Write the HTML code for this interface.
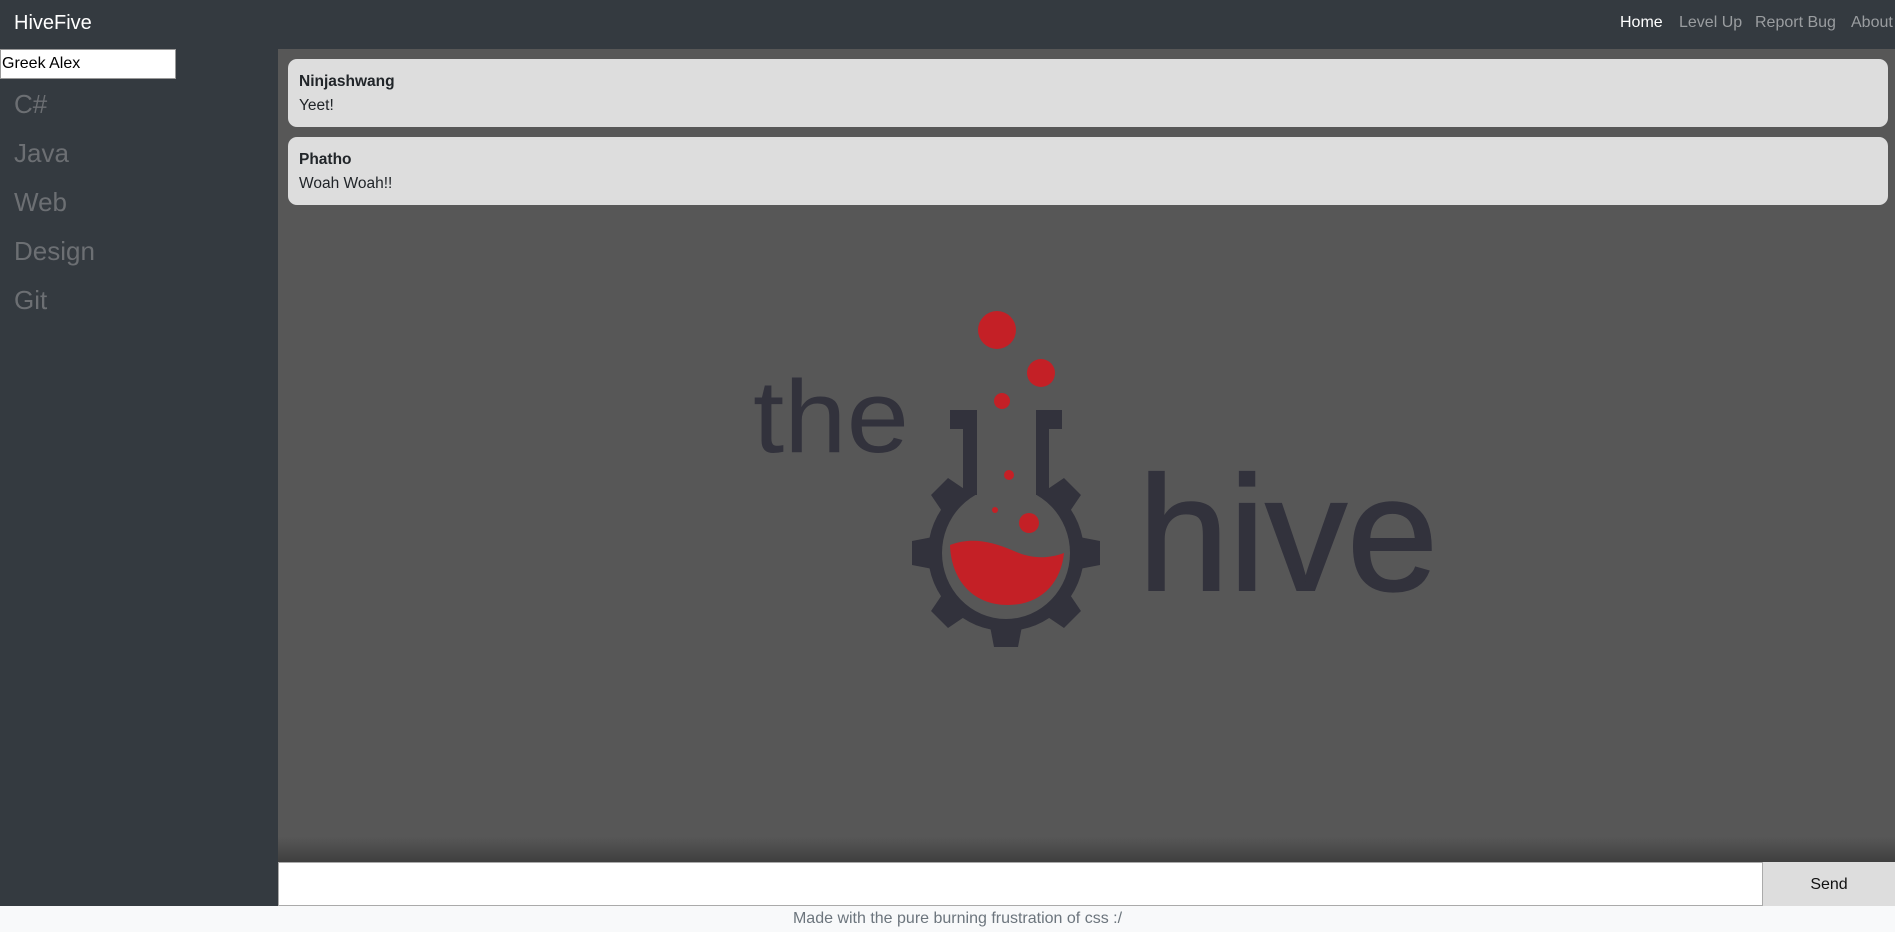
<!DOCTYPE html>
<html><head><meta charset="utf-8"><style>
*{box-sizing:border-box;margin:0;padding:0}
body{width:1895px;height:929px;overflow:hidden;font-family:"Liberation Sans",sans-serif;background:#f8f9fa;position:relative}
.nav{position:absolute;left:0;top:0;width:1895px;height:49px;background:#343a40}
.brand{position:absolute;left:14px;top:12px;font-size:20px;color:#fff}
.links{position:absolute;top:14px;font-size:16px;color:#9a9da0}
.side{position:absolute;left:0;top:49px;width:278px;height:857px;background:#343a40}
.name{position:absolute;left:0;top:49px;width:176px;height:30px;background:#fff;border:1px solid #999;font-size:16px;padding:5px 1px;color:#000}
.item{position:absolute;left:14px;font-size:26px;color:#6c6f73}
.main{position:absolute;left:278px;top:49px;width:1617px;height:813px;background:#575757;overflow:hidden}
.shade{position:absolute;left:0;bottom:0;width:100%;height:25px;background:linear-gradient(#575757,#3f3f3f)}
.card{position:absolute;left:10px;width:1600px;height:68px;background:#dddddd;border-radius:9px;padding:14px 11px 0;color:#212529;font-size:15.5px}
.card b{display:block;margin-bottom:6px}
.inp{position:absolute;left:278px;top:862px;width:1485px;height:44px;background:#fff;border:1px solid #aaa}
.send{position:absolute;left:1763px;top:862px;width:132px;height:44px;background:#dddddd;font-size:16px;text-align:center;line-height:46px;color:#111}
.foot{position:absolute;left:0;top:906px;width:1895px;text-align:center;font-size:16px;color:#6c757d;padding-left:20px;line-height:26px}
</style></head><body>
<div class="nav"><div class="brand">HiveFive</div>
<span class="links" style="left:1620px;color:#fff">Home</span>
<span class="links" style="left:1679px">Level Up</span>
<span class="links" style="left:1755px">Report Bug</span>
<span class="links" style="left:1851px">About</span></div>
<div class="side">
<div class="item" style="top:40px">C#</div>
<div class="item" style="top:89px">Java</div>
<div class="item" style="top:138px">Web</div>
<div class="item" style="top:187px">Design</div>
<div class="item" style="top:236px">Git</div>
</div>
<div class="name">Greek Alex</div>
<div class="main">
<div class="card" style="top:10px"><b>Ninjashwang</b>Yeet!</div>
<div class="card" style="top:88px"><b>Phatho</b>Woah Woah!!</div>
<div class="shade"></div>
<svg width="1617" height="813" style="position:absolute;left:0;top:0" viewBox="278 49 1617 813">
<defs><path id="t" d="M-17,-68 L-12,-94 L12,-94 L17,-68Z"/></defs>
<g fill="#32323c">
<text x="753" y="452" font-size="103" textLength="156" lengthAdjust="spacingAndGlyphs" font-family="Liberation Sans">the</text>
<text x="1138" y="590" font-size="163" textLength="300" lengthAdjust="spacingAndGlyphs" font-family="Liberation Sans" stroke="#32323c" stroke-width="2">hive</text>
<g transform="translate(1006,553)">
<circle r="78"/>
<use href="#t" transform="rotate(45)"/><use href="#t" transform="rotate(90)"/><use href="#t" transform="rotate(135)"/><use href="#t" transform="rotate(180)"/><use href="#t" transform="rotate(225)"/><use href="#t" transform="rotate(270)"/><use href="#t" transform="rotate(315)"/>
<ellipse rx="64" ry="66" fill="#575757"/>
<path d="M-56,-8 C-35,-16 -15,-12 8,-2 C25,6 42,6 58,0 C55,30 35,52 2,52 C-35,52 -55,25 -56,-8Z" fill="#c42026"/>
</g>
<path d="M950,410 H977 V495 H963 V429 H950Z"/>
<path d="M1036,410 H1062 V429 H1049 V495 H1036Z"/>
</g>
<rect x="977" y="429" width="59" height="70" fill="#575757"/>
<g fill="#c42026">
<circle cx="997" cy="330" r="19"/>
<circle cx="1041" cy="373" r="14"/>
<circle cx="1002" cy="401" r="8"/>
<circle cx="1009" cy="475" r="5"/>
<circle cx="995" cy="510" r="3"/>
<circle cx="1029" cy="523" r="10"/>
</g>
</svg>
</div>
<div class="inp"></div>
<div class="send">Send</div>
<div class="foot">Made with the pure burning frustration of css :/</div>
</body></html>
